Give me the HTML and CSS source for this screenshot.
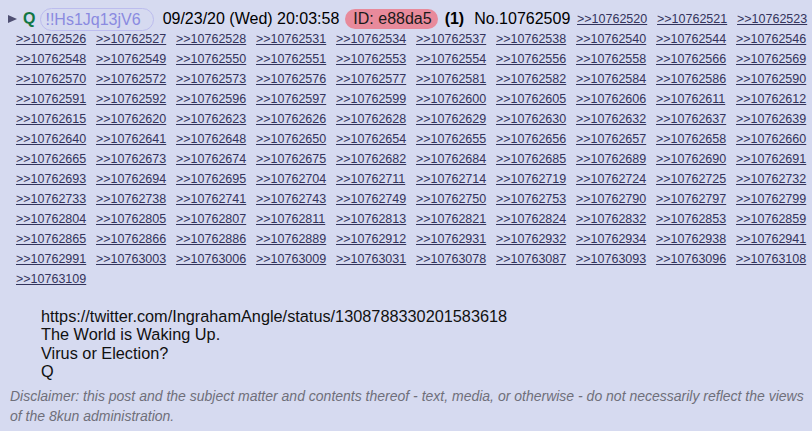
FILE: index.html
```html
<!DOCTYPE html>
<html lang="en">
<head>
    <meta charset="UTF-8">
    <meta name="viewport" content="width=device-width, initial-scale=1.0">
    <title>No.10762509</title>
    <link rel="stylesheet" href="styles.css">
</head>
<body>
    <div class="post" id="reply_10762509">
        <div class="intro">
            <div class="head">
                <span class="arrow"></span>
                <span class="name">Q</span>
                <span class="trip">!!Hs1Jq13jV6</span>
                <time>09/23/20 (Wed) 20:03:58</time>
                <span class="poster-id">ID: e88da5</span>
                <b class="count">(1)</b>
                <span class="post-no">No.10762509</span>
            </div>
            <a href="#10762520">&gt;&gt;10762520</a>
            <a href="#10762521">&gt;&gt;10762521</a>
            <a href="#10762523">&gt;&gt;10762523</a>
            <a href="#10762526">&gt;&gt;10762526</a>
            <a href="#10762527">&gt;&gt;10762527</a>
            <a href="#10762528">&gt;&gt;10762528</a>
            <a href="#10762531">&gt;&gt;10762531</a>
            <a href="#10762534">&gt;&gt;10762534</a>
            <a href="#10762537">&gt;&gt;10762537</a>
            <a href="#10762538">&gt;&gt;10762538</a>
            <a href="#10762540">&gt;&gt;10762540</a>
            <a href="#10762544">&gt;&gt;10762544</a>
            <a href="#10762546">&gt;&gt;10762546</a>
            <a href="#10762548">&gt;&gt;10762548</a>
            <a href="#10762549">&gt;&gt;10762549</a>
            <a href="#10762550">&gt;&gt;10762550</a>
            <a href="#10762551">&gt;&gt;10762551</a>
            <a href="#10762553">&gt;&gt;10762553</a>
            <a href="#10762554">&gt;&gt;10762554</a>
            <a href="#10762556">&gt;&gt;10762556</a>
            <a href="#10762558">&gt;&gt;10762558</a>
            <a href="#10762566">&gt;&gt;10762566</a>
            <a href="#10762569">&gt;&gt;10762569</a>
            <a href="#10762570">&gt;&gt;10762570</a>
            <a href="#10762572">&gt;&gt;10762572</a>
            <a href="#10762573">&gt;&gt;10762573</a>
            <a href="#10762576">&gt;&gt;10762576</a>
            <a href="#10762577">&gt;&gt;10762577</a>
            <a href="#10762581">&gt;&gt;10762581</a>
            <a href="#10762582">&gt;&gt;10762582</a>
            <a href="#10762584">&gt;&gt;10762584</a>
            <a href="#10762586">&gt;&gt;10762586</a>
            <a href="#10762590">&gt;&gt;10762590</a>
            <a href="#10762591">&gt;&gt;10762591</a>
            <a href="#10762592">&gt;&gt;10762592</a>
            <a href="#10762596">&gt;&gt;10762596</a>
            <a href="#10762597">&gt;&gt;10762597</a>
            <a href="#10762599">&gt;&gt;10762599</a>
            <a href="#10762600">&gt;&gt;10762600</a>
            <a href="#10762605">&gt;&gt;10762605</a>
            <a href="#10762606">&gt;&gt;10762606</a>
            <a href="#10762611">&gt;&gt;10762611</a>
            <a href="#10762612">&gt;&gt;10762612</a>
            <a href="#10762615">&gt;&gt;10762615</a>
            <a href="#10762620">&gt;&gt;10762620</a>
            <a href="#10762623">&gt;&gt;10762623</a>
            <a href="#10762626">&gt;&gt;10762626</a>
            <a href="#10762628">&gt;&gt;10762628</a>
            <a href="#10762629">&gt;&gt;10762629</a>
            <a href="#10762630">&gt;&gt;10762630</a>
            <a href="#10762632">&gt;&gt;10762632</a>
            <a href="#10762637">&gt;&gt;10762637</a>
            <a href="#10762639">&gt;&gt;10762639</a>
            <a href="#10762640">&gt;&gt;10762640</a>
            <a href="#10762641">&gt;&gt;10762641</a>
            <a href="#10762648">&gt;&gt;10762648</a>
            <a href="#10762650">&gt;&gt;10762650</a>
            <a href="#10762654">&gt;&gt;10762654</a>
            <a href="#10762655">&gt;&gt;10762655</a>
            <a href="#10762656">&gt;&gt;10762656</a>
            <a href="#10762657">&gt;&gt;10762657</a>
            <a href="#10762658">&gt;&gt;10762658</a>
            <a href="#10762660">&gt;&gt;10762660</a>
            <a href="#10762665">&gt;&gt;10762665</a>
            <a href="#10762673">&gt;&gt;10762673</a>
            <a href="#10762674">&gt;&gt;10762674</a>
            <a href="#10762675">&gt;&gt;10762675</a>
            <a href="#10762682">&gt;&gt;10762682</a>
            <a href="#10762684">&gt;&gt;10762684</a>
            <a href="#10762685">&gt;&gt;10762685</a>
            <a href="#10762689">&gt;&gt;10762689</a>
            <a href="#10762690">&gt;&gt;10762690</a>
            <a href="#10762691">&gt;&gt;10762691</a>
            <a href="#10762693">&gt;&gt;10762693</a>
            <a href="#10762694">&gt;&gt;10762694</a>
            <a href="#10762695">&gt;&gt;10762695</a>
            <a href="#10762704">&gt;&gt;10762704</a>
            <a href="#10762711">&gt;&gt;10762711</a>
            <a href="#10762714">&gt;&gt;10762714</a>
            <a href="#10762719">&gt;&gt;10762719</a>
            <a href="#10762724">&gt;&gt;10762724</a>
            <a href="#10762725">&gt;&gt;10762725</a>
            <a href="#10762732">&gt;&gt;10762732</a>
            <a href="#10762733">&gt;&gt;10762733</a>
            <a href="#10762738">&gt;&gt;10762738</a>
            <a href="#10762741">&gt;&gt;10762741</a>
            <a href="#10762743">&gt;&gt;10762743</a>
            <a href="#10762749">&gt;&gt;10762749</a>
            <a href="#10762750">&gt;&gt;10762750</a>
            <a href="#10762753">&gt;&gt;10762753</a>
            <a href="#10762790">&gt;&gt;10762790</a>
            <a href="#10762797">&gt;&gt;10762797</a>
            <a href="#10762799">&gt;&gt;10762799</a>
            <a href="#10762804">&gt;&gt;10762804</a>
            <a href="#10762805">&gt;&gt;10762805</a>
            <a href="#10762807">&gt;&gt;10762807</a>
            <a href="#10762811">&gt;&gt;10762811</a>
            <a href="#10762813">&gt;&gt;10762813</a>
            <a href="#10762821">&gt;&gt;10762821</a>
            <a href="#10762824">&gt;&gt;10762824</a>
            <a href="#10762832">&gt;&gt;10762832</a>
            <a href="#10762853">&gt;&gt;10762853</a>
            <a href="#10762859">&gt;&gt;10762859</a>
            <a href="#10762865">&gt;&gt;10762865</a>
            <a href="#10762866">&gt;&gt;10762866</a>
            <a href="#10762886">&gt;&gt;10762886</a>
            <a href="#10762889">&gt;&gt;10762889</a>
            <a href="#10762912">&gt;&gt;10762912</a>
            <a href="#10762931">&gt;&gt;10762931</a>
            <a href="#10762932">&gt;&gt;10762932</a>
            <a href="#10762934">&gt;&gt;10762934</a>
            <a href="#10762938">&gt;&gt;10762938</a>
            <a href="#10762941">&gt;&gt;10762941</a>
            <a href="#10762991">&gt;&gt;10762991</a>
            <a href="#10763003">&gt;&gt;10763003</a>
            <a href="#10763006">&gt;&gt;10763006</a>
            <a href="#10763009">&gt;&gt;10763009</a>
            <a href="#10763031">&gt;&gt;10763031</a>
            <a href="#10763078">&gt;&gt;10763078</a>
            <a href="#10763087">&gt;&gt;10763087</a>
            <a href="#10763093">&gt;&gt;10763093</a>
            <a href="#10763096">&gt;&gt;10763096</a>
            <a href="#10763108">&gt;&gt;10763108</a>
            <a href="#10763109">&gt;&gt;10763109</a>
        </div>
        <div class="body">
            <p>https://twitter.com/IngrahamAngle/status/1308788330201583618</p>
            <p>The World is Waking Up.</p>
            <p>Virus or Election?</p>
            <p>Q</p>
        </div>
        <p class="disclaimer">Disclaimer: this post and the subject matter and contents thereof - text, media, or otherwise - do not necessarily reflect the views of the 8kun administration.</p>
    </div>
</body>
</html>
```

FILE: styles.css
```css
*{
    padding: 0;
    margin: 0;
}
body{
    background: #d6daf0;
    font-family: "Liberation Sans", Arial, sans-serif;
    color: #000;
}
.post{
    padding-top: 9px;
}

/* 帖子头部 + 回复链接 */
.intro{
    display: flex;
    flex-wrap: wrap;
    column-gap: 10px;
    padding-left: 16px;
    line-height: 20px;
    font-size: 12.5px;
}
.intro a{
    width: 70px;
    color: #34345c;
    text-decoration: underline;
    white-space: nowrap;
}
.head{
    display: flex;
    align-items: center;
    width: 559px;
    height: 20px;
    margin-left: -8px;
    font-size: 16px;
    white-space: nowrap;
}
.arrow{
    width: 0;
    height: 0;
    border-left: 9px solid #4f4f72;
    border-top: 4.5px solid transparent;
    border-bottom: 4.5px solid transparent;
}
.name{
    margin-left: 6px;
    color: #117743;
    font-weight: bold;
}
.trip{
    margin-left: 5px;
    height: 21px;
    line-height: 21px;
    padding: 0 12px 0 4px;
    border: 1px solid #bcbcee;
    border-radius: 12px;
    color: #8a8ae0;
}
.head time{
    margin-left: 9px;
}
.poster-id{
    margin-left: 6px;
    height: 20px;
    line-height: 20px;
    padding: 0 6px 0 8px;
    border-radius: 10px;
    background: #e88a9b;
    color: #1a1a1a;
}
.count{
    margin-left: 7px;
}
.post-no{
    margin-left: 10px;
}

/* 正文 */
.body{
    margin-top: 18px;
    padding-left: 41px;
    font-size: 16.3px;
    line-height: 18.4px;
    color: #111;
}
.disclaimer{
    margin-top: 5px;
    padding: 0 8px 0 10px;
    font-size: 14px;
    line-height: 20px;
    font-style: italic;
    color: #6f6f7a;
}
```
